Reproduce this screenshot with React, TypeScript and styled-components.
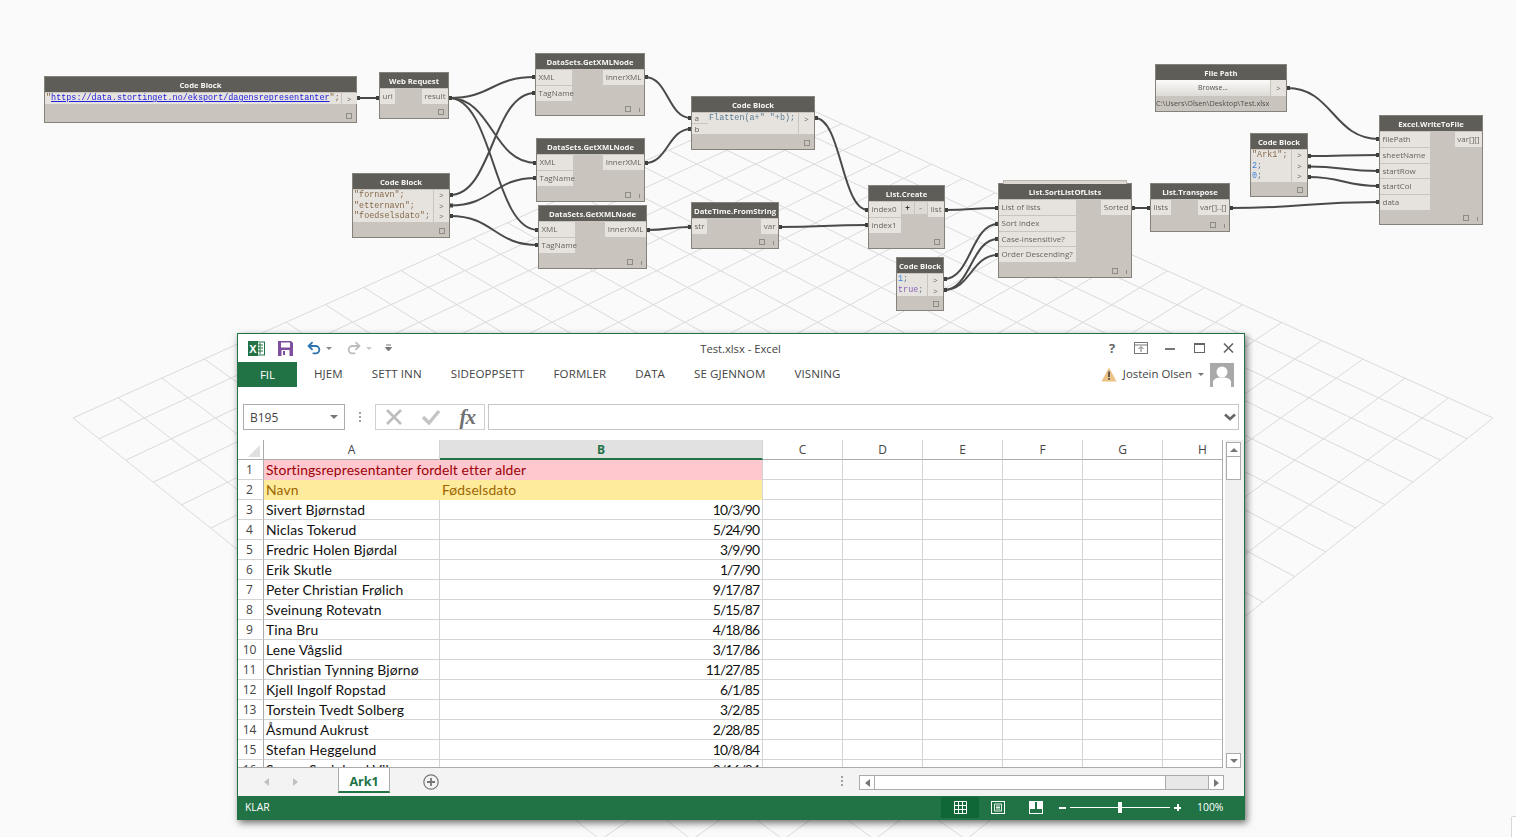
import React from "react";
import styled, {createGlobalStyle} from "styled-components";
import {Redo2, Undo2} from "lucide-react";

const GlobalStyle = createGlobalStyle`
    html, body {
        margin: 0;
        background: #fafafa;
        overflow: hidden;
    }
`;

const Page = styled.div`
    position: relative;
    width: 1516px;
    height: 837px;
    overflow: hidden;
    background: #fafafa;
`;

const CanvasDrawing = styled.svg`
    position: absolute;
    left: 0;
    top: 0;
`;

const NodeLayer = styled.div`
    position: absolute;
    inset: 0;
    filter: blur(0.25px);
`;

const NodeBox = styled.div<{ $x: number; $y: number; $w: number; $h: number }>`
    position: absolute;
    left: ${({$x}) => $x}px;
    top: ${({$y}) => $y}px;
    width: ${({$w}) => $w}px;
    height: ${({$h}) => $h}px;
    box-sizing: border-box;
    display: flex;
    flex-direction: column;
    background: #c9c5be;
    border: 1px solid #85827b;
    font-family: "Open Sans", sans-serif;
    font-size: 8px;
    color: #66635e;
`;

const StackEdge = styled.div`
    position: absolute;
    left: 4px;
    right: 4px;
    top: -4px;
    height: 3px;
    background: #dbd8d2;
    border: 1px solid #b9b6b0;
    border-bottom: none;
`;

const NodeHeader = styled.div`
    height: 15px;
    flex: none;
    display: flex;
    align-items: center;
    justify-content: center;
    background: #5f5d58;
    color: #f6f6f4;
    font-size: 7.7px;
    font-weight: 700;
    white-space: nowrap;
`;

const NodeBody = styled.div`
    flex: 1;
    display: flex;
    justify-content: space-between;
    align-items: flex-start;
    padding-top: 1px;
`;

const PortColumn = styled.div<{ $w?: number }>`
    display: flex;
    flex-direction: column;
    gap: 1px;
    width: ${({$w}) => $w ? `${$w}px` : "auto"};
`;

const Port = styled.div<{ $h?: number; $right?: boolean }>`
    height: ${({$h}) => $h ?? 14.75}px;
    line-height: ${({$h}) => $h ?? 14.75}px;
    padding: 0 2.5px;
    background: #e6e3de;
    white-space: nowrap;
    text-align: ${({$right}) => $right ? "right" : "left"};
`;

const ListButtons = styled.div`
    display: flex;
    gap: 1px;
    margin-left: -1px;
`;

const ListButton = styled.div<{ $dark?: boolean }>`
    width: 12px;
    height: 12px;
    line-height: 12px;
    text-align: center;
    font-weight: 700;
    background: #dedbd6;
    color: ${({$dark}) => $dark ? "#3b3a37" : "#99958f"};
`;

const NodeFooter = styled.div`
    height: 12px;
    flex: none;
    display: flex;
    justify-content: flex-end;
    align-items: center;
    gap: 8px;
    padding-right: 4px;
`;

const ResizeSquare = styled.span`
    width: 4px;
    height: 4px;
    border: 1px solid #8f8c86;
`;

const InfoTick = styled.span`
    width: 1px;
    height: 4px;
    margin-top: 2px;
    background: #8f8c86;
`;

const CodeRows = styled.div`
    display: flex;
    flex: none;
    padding-top: 1px;
`;

const CodePanel = styled.div<{ $grow?: boolean; $w?: number }>`
    flex: ${({$grow}) => $grow ? 1 : "none"};
    width: ${({$w}) => $w ? `${$w}px` : "auto"};
    padding: 0 1px;
    background: #e6e3de;
    font-family: "Liberation Mono", "DejaVu Sans Mono", monospace;
    font-size: 8.45px;
    white-space: nowrap;
`;

const CodeLine = styled.div<{ $h?: number }>`
    height: ${({$h}) => $h ?? 10.7}px;
    line-height: ${({$h}) => $h ?? 10.7}px;
`;

const Str = styled.span`
    color: #86694a;
`;

const Num = styled.span`
    color: #3b83e0;
`;

const Bool = styled.span`
    color: #8a62b8;
`;

const Plain = styled.span`
    color: #5d7c92;
`;

const UrlLink = styled.span`
    color: #2222dd;
    text-decoration: underline;
`;

const OutColumn = styled.div`
    flex: none;
    width: 15px;
    margin-left: 1px;
    display: flex;
    flex-direction: column;
    background: #e6e3de;
`;

const OutMark = styled.div<{ $h?: number }>`
    height: ${({$h}) => $h ?? 10.7}px;
    line-height: ${({$h}) => $h ?? 10.7}px;
    text-align: center;
    font-size: 8px;
`;

const BrowseRow = styled.div`
    display: flex;
    height: 16px;
    flex: none;
`;

const BrowseButton = styled.div`
    flex: 1;
    line-height: 16px;
    text-align: center;
    font-size: 7px;
    color: #55534f;
    background: linear-gradient(#fbfbfa, #dedbd5);
`;

const PathText = styled.div`
    line-height: 15px;
    font-size: 7.3px;
    color: #4f4d49;
    white-space: nowrap;
`;

/* Excel window */

const ExcelWindow = styled.div`
    position: absolute;
    left: 237px;
    top: 333px;
    width: 1008px;
    height: 487px;
    box-sizing: border-box;
    display: flex;
    flex-direction: column;
    background: #fff;
    border: 1px solid #217346;
    box-shadow: 2px 3px 7px rgba(0, 0, 0, 0.55);
    font-family: "Open Sans", sans-serif;
    color: #444;
`;

const TitleBar = styled.div`
    position: relative;
    height: 28px;
    flex: none;
    display: flex;
    align-items: center;
    padding: 0 10px;
`;

const QuickAccess = styled.div`
    display: flex;
    align-items: center;
`;

const TitleText = styled.div`
    flex: 1;
    text-align: center;
    font-size: 11.2px;
    color: #444;
    margin-left: -16px;
`;

const WindowButtons = styled.div`
    display: flex;
    align-items: center;
    gap: 15px;
`;

const HelpMark = styled.span`
    font-size: 13px;
    font-weight: 700;
    color: #666;
    width: 14px;
    text-align: center;
`;

const TabsRow = styled.div`
    height: 25px;
    flex: none;
    display: flex;
    align-items: center;
    gap: 29px;
    font-size: 11.55px;
    padding-right: 10px;
`;

const FileTab = styled.div`
    width: 59px;
    height: 25px;
    line-height: 25px;
    margin-right: -12px;
    text-align: center;
    background: #217346;
    color: #fff;
`;

const RibbonTab = styled.div`
    margin-bottom: 2px;
    letter-spacing: 0.1px;
    color: #444;
    white-space: nowrap;
`;

const Account = styled.div`
    margin-left: auto;
    display: flex;
    align-items: center;
    font-size: 11.4px;
`;

const AccountName = styled.span`
    margin: 0 0 2px 5px;
    color: #444;
`;

const Avatar = styled.svg`
    display: block;
    margin-left: 6px;
`;

const Caret = styled.span<{ $color?: string; $up?: boolean; $size?: number }>`
    display: inline-block;
    width: 0;
    height: 0;
    border-left: ${({$size}) => $size ?? 3}px solid transparent;
    border-right: ${({$size}) => $size ?? 3}px solid transparent;
    ${({$up, $color, $size}) => $up
        ? `border-bottom: ${$size ?? 3}px solid ${$color ?? "#777"};`
        : `border-top: ${$size ?? 3}px solid ${$color ?? "#777"};`}
`;

const FormulaRow = styled.div`
    height: 26px;
    flex: none;
    margin: 17px 5px 10px 5px;
    display: flex;
    align-items: stretch;
`;

const NameBox = styled.div`
    width: 102px;
    box-sizing: border-box;
    display: flex;
    align-items: center;
    justify-content: space-between;
    padding: 0 6px 0 6px;
    border: 1px solid #ababab;
    font-size: 12px;
    color: #444;
`;

const GripDots = styled.div`
    width: 30px;
    display: flex;
    flex-direction: column;
    align-items: center;
    justify-content: center;
    gap: 2px;
`;

const GripDot = styled.span`
    width: 2px;
    height: 2px;
    background: #a0a0a0;
`;

const FormulaButtons = styled.div`
    width: 110px;
    box-sizing: border-box;
    display: flex;
    align-items: center;
    justify-content: space-between;
    padding: 0 9px;
    border: 1px solid #d0d0d0;
`;

const FxText = styled.span`
    font-family: "Liberation Serif", serif;
    font-style: italic;
    font-weight: 700;
    font-size: 21px;
    color: #707070;
    letter-spacing: -1px;
`;

const FormulaInput = styled.div`
    flex: 1;
    margin-left: 3px;
    display: flex;
    align-items: center;
    justify-content: flex-end;
    padding-right: 2px;
    border: 1px solid #c6c6c6;
`;

const SheetArea = styled.div`
    height: 328px;
    flex: none;
    display: flex;
`;

const Sheet = styled.div`
    width: 985px;
    height: 328px;
    flex: none;
    overflow: hidden;
    box-sizing: border-box;
    display: grid;
    grid-template-columns: 26px 176px 323px repeat(6, 80px);
    grid-auto-rows: 20px;
    border-right: 1px solid #ababab;
    border-bottom: 1px solid #ababab;
`;

const CornerCell = styled.div`
    position: relative;
    box-sizing: border-box;
    border-right: 1px solid #ababab;
    border-bottom: 1px solid #ababab;
`;

const CornerMark = styled.span`
    position: absolute;
    right: 3px;
    bottom: 2px;
    width: 12px;
    height: 12px;
    background: #dfdfdf;
    clip-path: polygon(100% 0, 100% 100%, 0 100%);
`;

const ColumnHead = styled.div<{ $active?: boolean }>`
    box-sizing: border-box;
    text-align: center;
    line-height: 19px;
    font-size: 12px;
    background: ${({$active}) => $active ? "#e1e1e1" : "#fff"};
    color: ${({$active}) => $active ? "#217346" : "#444"};
    font-weight: ${({$active}) => $active ? 700 : 400};
    border-right: 1px solid #d4d4d4;
    border-bottom: ${({$active}) => $active ? "2px solid #217346" : "1px solid #ababab"};
`;

const RowHead = styled.div`
    box-sizing: border-box;
    text-align: center;
    line-height: 20px;
    font-size: 12px;
    padding-right: 2px;
    color: #444;
    border-right: 1px solid #ababab;
    border-bottom: 1px solid #d4d4d4;
`;

const Cell = styled.div<{ $fill?: string; $color?: string; $noLine?: boolean; $span?: number }>`
    box-sizing: border-box;
    grid-column: span ${({$span}) => $span ?? 1};
    padding: 0 2px;
    font-family: "Lato", sans-serif;
    font-size: 13.9px;
    line-height: 20px;
    letter-spacing: 0.12px;
    white-space: nowrap;
    overflow: hidden;
    background: ${({$fill}) => $fill ?? "#fff"};
    color: ${({$color}) => $color ?? "#111"};
    border-right: 1px solid ${({$fill, $noLine}) => $noLine ? ($fill ?? "#fff") : "#d4d4d4"};
    border-bottom: 1px solid ${({$fill}) => $fill ?? "#d4d4d4"};
`;

const DateCell = styled(Cell)`
    text-align: right;
    letter-spacing: -0.95px;
    padding-right: 3px;
`;

const VerticalScroll = styled.div`
    flex: 1;
    display: flex;
    flex-direction: column;
    align-items: center;
    padding-top: 2px;
    background: linear-gradient(to right, #fff 2px, #f0f0f0 2px, #f0f0f0 20px);
`;

const ScrollButton = styled.div`
    width: 15px;
    height: 15px;
    box-sizing: border-box;
    flex: none;
    display: flex;
    align-items: center;
    justify-content: center;
    background: #fff;
    border: 1px solid #ababab;
`;

const VerticalThumb = styled.div`
    width: 15px;
    height: 23px;
    flex: none;
    box-sizing: border-box;
    background: #fff;
    border: 1px solid #ababab;
    border-top: none;
`;

const ScrollGap = styled.div`
    flex: 1;
`;

const TabBar = styled.div`
    height: 28px;
    flex: none;
    display: flex;
    align-items: flex-start;
    background: #f3f3f3;
`;

const SheetNav = styled.div`
    width: 100px;
    height: 28px;
    box-sizing: border-box;
    display: flex;
    align-items: center;
    padding-left: 26px;
    gap: 24px;
`;

const SheetTab = styled.div`
    width: 52px;
    height: 25px;
    box-sizing: border-box;
    text-align: center;
    line-height: 27px;
    font-size: 12.5px;
    font-weight: 700;
    color: #217346;
    background: #fff;
    border-left: 1px solid #ababab;
    border-right: 1px solid #ababab;
    border-bottom: 2px solid #217346;
`;

const AddSheet = styled.svg`
    display: block;
    margin: 6px 0 0 33px;
`;

const BarGrip = styled.div`
    margin: 8px 0 0 auto;
    width: 2px;
    display: flex;
    flex-direction: column;
    gap: 2px;
`;

const HorizontalScroll = styled.div`
    width: 365px;
    height: 15px;
    margin: 7px 20px 0 16px;
    box-sizing: border-box;
    display: flex;
    background: #e8e8e8;
    border: 1px solid #ababab;
`;

const HorizontalEnd = styled.div`
    width: 14px;
    flex: none;
    display: flex;
    align-items: center;
    justify-content: center;
    background: #fff;
`;

const HorizontalThumb = styled.div`
    width: 292px;
    flex: none;
    box-sizing: border-box;
    background: #fff;
    border-left: 1px solid #ababab;
    border-right: 1px solid #ababab;
`;

const HorizontalTrack = styled.div`
    flex: 1;
    border-right: 1px solid #ababab;
`;

const StatusBar = styled.div`
    height: 23px;
    flex: none;
    display: flex;
    align-items: center;
    background: #217346;
    color: #fff;
    font-size: 10.4px;
`;

const StatusLabel = styled.span`
    margin: 0 0 2px 7px;
`;

const ViewButton = styled.div<{ $active?: boolean }>`
    width: 38px;
    height: 21px;
    display: flex;
    align-items: center;
    justify-content: center;
    background: ${({$active}) => $active ? "#0f6637" : "transparent"};
`;

const ViewGroup = styled.div`
    margin-left: auto;
    display: flex;
`;

const ZoomMark = styled.span<{ $plus?: boolean }>`
    position: relative;
    width: 7px;
    height: 2px;
    margin: ${({$plus}) => $plus ? "0 0 0 4px" : "0 4px 0 4px"};
    background: #fff;
    ${({$plus}) => $plus ? `
        &::after {
            content: "";
            position: absolute;
            left: 2.5px;
            top: -2.5px;
            width: 2px;
            height: 7px;
            background: #fff;
        }
    ` : ""}
`;

const ZoomTrack = styled.div`
    position: relative;
    width: 100px;
    height: 1px;
    background: #fff;
`;

const ZoomThumb = styled.span`
    position: absolute;
    left: 48px;
    top: -5px;
    width: 4px;
    height: 11px;
    background: #fff;
`;

const ZoomValue = styled.span`
    width: 27px;
    margin: 0 20px 2px 16px;
    font-size: 10.4px;
    white-space: nowrap;
`;

const CornerScrap = styled.div`
    position: absolute;
    left: 1511px;
    top: 816px;
    width: 8px;
    height: 24px;
    background: #fff;
    border: 1px solid #d8d8d8;
    border-radius: 2px;
`;

/* background grid: a projective map of the unit square onto the floor quad */
const floorGrid = () => {
    const [x0, y0, x1, y1, x2, y2, x3, y3] = [785, 98, 1493, 418, 783, 986, 73, 418];
    const dx1 = x1 - x2, dx2 = x3 - x2, sx = x0 - x1 + x2 - x3;
    const dy1 = y1 - y2, dy2 = y3 - y2, sy = y0 - y1 + y2 - y3;
    const den = dx1 * dy2 - dx2 * dy1;
    const g = (sx * dy2 - dx2 * sy) / den;
    const h = (dx1 * sy - sx * dy1) / den;
    const map = (u: number, v: number) => {
        const w = g * u + h * v + 1;
        return [
            ((x1 - x0 + g * x1) * u + (x3 - x0 + h * x3) * v + x0) / w,
            ((y1 - y0 + g * y1) * u + (y3 - y0 + h * y3) * v + y0) / w,
        ];
    };
    const lines: number[][] = [];
    for (let i = 0; i <= 20; i++) {
        lines.push([...map(i / 20, 0), ...map(i / 20, 1)]);
        lines.push([...map(0, i / 20), ...map(1, i / 20)]);
    }
    return lines;
};

const wires: number[][] = [
    [357, 98, 379, 98],
    [449, 98, 535, 77],
    [449, 98, 536, 163],
    [449, 98, 538, 230],
    [450, 195, 535, 93],
    [450, 205.5, 536, 178],
    [450, 216, 538, 245],
    [645, 77, 691, 118],
    [645, 163, 691, 129],
    [647, 230, 691, 227],
    [815, 118, 868, 210],
    [779, 227, 868, 225],
    [945, 210, 998, 208],
    [944, 279, 998, 224],
    [944, 290, 998, 239],
    [944, 290, 998, 255],
    [1132, 208, 1150, 208],
    [1230, 208, 1379, 202],
    [1287, 88, 1379, 139],
    [1308, 156, 1379, 155],
    [1308, 166.5, 1379, 171],
    [1308, 177, 1379, 186],
];

const wirePath = ([a, b, c, d]: number[]) => {
    const bend = (c - a) / 2;
    return `M${a} ${b}C${a + bend} ${b} ${c - bend} ${d} ${c} ${d}`;
};

const Canvas: React.FC = () => <CanvasDrawing width={1516} height={837}>
    {floorGrid().map((l, i) =>
        <line key={i} x1={l[0]} y1={l[1]} x2={l[2]} y2={l[3]} stroke="#dadada" strokeWidth={1}/>)}
    {wires.map((w, i) => <g key={i}>
        <path d={wirePath(w)} fill="none" stroke="#4a4a48" strokeWidth={2}/>
        <rect x={w[0]} y={w[1] - 2} width={3} height={4} fill="#3f3f3d"/>
        <rect x={w[2] - 3} y={w[3] - 2} width={3} height={4} fill="#3f3f3d"/>
    </g>)}
</CanvasDrawing>;

type FuncNodeProps = {
    title: string;
    x: number;
    y: number;
    w: number;
    h: number;
    inputs: string[];
    outputs: string[];
    inWidth?: number;
    tick?: boolean;
    stacked?: boolean;
    middle?: React.ReactNode;
};

const NodeMarks: React.FC<{ tick?: boolean }> = ({tick}) => <NodeFooter>
    <ResizeSquare/>
    {tick && <InfoTick/>}
</NodeFooter>;

const FuncNode: React.FC<FuncNodeProps> = ({title, x, y, w, h, inputs, outputs, inWidth, tick, stacked, middle}) =>
    <NodeBox $x={x} $y={y} $w={w} $h={h}>
        {stacked && <StackEdge/>}
        <NodeHeader>{title}</NodeHeader>
        <NodeBody>
            <PortColumn $w={inWidth}>
                {inputs.map(name => <Port key={name}>{name}</Port>)}
            </PortColumn>
            {middle}
            <PortColumn>
                {outputs.map(name => <Port key={name} $right>{name}</Port>)}
            </PortColumn>
        </NodeBody>
        <NodeMarks tick={tick}/>
    </NodeBox>;

const Nodes: React.FC = () => <NodeLayer>
    <NodeBox $x={44} $y={76} $w={313} $h={47}>
        <NodeHeader>Code Block</NodeHeader>
        <CodeRows>
            <CodePanel $grow>
                <CodeLine $h={11}><Str>"</Str><UrlLink>https://data.stortinget.no/eksport/dagensrepresentanter</UrlLink><Str>";</Str></CodeLine>
            </CodePanel>
            <OutColumn><OutMark $h={11}>&gt;</OutMark></OutColumn>
        </CodeRows>
        <ScrollGap/>
        <NodeMarks/>
    </NodeBox>

    <FuncNode title="Web Request" x={379} y={72} w={70} h={47} inputs={["url"]} outputs={["result"]}/>
    <FuncNode title="DataSets.GetXMLNode" x={535} y={53} w={110} h={63} inputs={["XML", "TagName"]}
              outputs={["InnerXML"]} inWidth={36} tick/>
    <FuncNode title="DataSets.GetXMLNode" x={536} y={138} w={109} h={64} inputs={["XML", "TagName"]}
              outputs={["InnerXML"]} inWidth={36} tick/>
    <FuncNode title="DataSets.GetXMLNode" x={538} y={205} w={109} h={64} inputs={["XML", "TagName"]}
              outputs={["InnerXML"]} inWidth={36} tick/>

    <NodeBox $x={352} $y={173} $w={98} $h={65}>
        <NodeHeader>Code Block</NodeHeader>
        <CodeRows>
            <CodePanel $grow>
                <CodeLine><Str>"fornavn";</Str></CodeLine>
                <CodeLine><Str>"etternavn";</Str></CodeLine>
                <CodeLine><Str>"foedselsdato";</Str></CodeLine>
            </CodePanel>
            <OutColumn>
                <OutMark>&gt;</OutMark>
                <OutMark>&gt;</OutMark>
                <OutMark>&gt;</OutMark>
            </OutColumn>
        </CodeRows>
        <ScrollGap/>
        <NodeMarks/>
    </NodeBox>

    <NodeBox $x={691} $y={96} $w={124} $h={54}>
        <NodeHeader>Code Block</NodeHeader>
        <CodeRows>
            <PortColumn $w={16}>
                <Port $h={10}>a</Port>
                <Port $h={10}>b</Port>
            </PortColumn>
            <CodePanel $w={88}><CodeLine $h={11}><Plain>Flatten(a+" "+b);</Plain></CodeLine></CodePanel>
            <OutColumn><OutMark $h={11}>&gt;</OutMark></OutColumn>
        </CodeRows>
        <ScrollGap/>
        <NodeMarks/>
    </NodeBox>

    <FuncNode title="DateTime.FromString" x={691} y={202} w={88} h={47} inputs={["str"]} outputs={["var"]} tick/>
    <FuncNode title="List.Create" x={868} y={185} w={77} h={64} inputs={["index0", "index1"]} outputs={["list"]} inWidth={32}
              middle={<ListButtons><ListButton $dark>+</ListButton><ListButton>-</ListButton></ListButtons>}/>
    <FuncNode title="List.SortListOfLists" x={998} y={183} w={134} h={95} stacked tick inWidth={77}
              inputs={["List of lists", "Sort index", "Case-insensitive?", "Order Descending?"]} outputs={["Sorted"]}/>

    <NodeBox $x={896} $y={257} $w={48} $h={54}>
        <NodeHeader>Code Block</NodeHeader>
        <CodeRows>
            <CodePanel $grow>
                <CodeLine $h={11}><Num>1</Num><Plain>;</Plain></CodeLine>
                <CodeLine $h={11}><Bool>true</Bool><Plain>;</Plain></CodeLine>
            </CodePanel>
            <OutColumn>
                <OutMark $h={11}>&gt;</OutMark>
                <OutMark $h={11}>&gt;</OutMark>
            </OutColumn>
        </CodeRows>
        <ScrollGap/>
        <NodeMarks/>
    </NodeBox>

    <NodeBox $x={1155} $y={64} $w={132} $h={48}>
        <NodeHeader>File Path</NodeHeader>
        <BrowseRow>
            <BrowseButton>Browse...</BrowseButton>
            <OutColumn><OutMark $h={16}>&gt;</OutMark></OutColumn>
        </BrowseRow>
        <PathText>C:\Users\Olsen\Desktop\Test.xlsx</PathText>
    </NodeBox>

    <NodeBox $x={1250} $y={133} $w={58} $h={64}>
        <NodeHeader>Code Block</NodeHeader>
        <CodeRows>
            <CodePanel $grow>
                <CodeLine><Str>"Ark1";</Str></CodeLine>
                <CodeLine><Num>2</Num><Plain>;</Plain></CodeLine>
                <CodeLine><Num>0</Num><Plain>;</Plain></CodeLine>
            </CodePanel>
            <OutColumn>
                <OutMark>&gt;</OutMark>
                <OutMark>&gt;</OutMark>
                <OutMark>&gt;</OutMark>
            </OutColumn>
        </CodeRows>
        <ScrollGap/>
        <NodeMarks/>
    </NodeBox>

    <FuncNode title="List.Transpose" x={1150} y={183} w={80} h={49} inputs={["lists"]} outputs={["var[]..[]"]} tick/>
    <FuncNode title="Excel.WriteToFile" x={1379} y={115} w={104} h={110} tick inWidth={50}
              inputs={["filePath", "sheetName", "startRow", "startCol", "data"]} outputs={["var[][]"]}/>
</NodeLayer>;

const people: [string, string][] = [
    ["Sivert Bjørnstad", "10/3/90"],
    ["Niclas Tokerud", "5/24/90"],
    ["Fredric Holen Bjørdal", "3/9/90"],
    ["Erik Skutle", "1/7/90"],
    ["Peter Christian Frølich", "9/17/87"],
    ["Sveinung Rotevatn", "5/15/87"],
    ["Tina Bru", "4/18/86"],
    ["Lene Vågslid", "3/17/86"],
    ["Christian Tynning Bjørnø", "11/27/85"],
    ["Kjell Ingolf Ropstad", "6/1/85"],
    ["Torstein Tvedt Solberg", "3/2/85"],
    ["Åsmund Aukrust", "2/28/85"],
    ["Stefan Heggelund", "10/8/84"],
    ["Sverre Sveinlund Vik", "9/16/84"],
];

const emptyColumns = ["C", "D", "E", "F", "G", "H"];

const EmptyCells: React.FC<{ row: number }> = ({row}) => <>
    {emptyColumns.map(c => <Cell key={`${c}${row}`}/>)}
</>;

const ExcelLogo = () => <svg width="17" height="17" viewBox="0 0 17 17" style={{display: "block"}}>
    <rect x="8" y="2" width="8.5" height="13" fill="#fff" stroke="#217346"/>
    <path d="M10 5h5M10 8h5M10 11h5M12 3v11" stroke="#217346" strokeWidth="1"/>
    <rect x="0" y="1" width="10" height="15" fill="#217346"/>
    <text x="5" y="13" textAnchor="middle" fontFamily="Liberation Sans" fontWeight="700" fontSize="11" fill="#fff">X</text>
</svg>;

const SaveIcon = () => <svg width="15" height="15" viewBox="0 0 15 15" style={{display: "block", margin: "0 13px 0 13px"}}>
    <path d="M0 0h13l2 2v13H0z" fill="#7d4f9e"/>
    <rect x="3" y="1.5" width="9" height="5" fill="#fff"/>
    <rect x="3.5" y="9" width="8" height="6" fill="#fff"/>
    <rect x="5" y="10" width="2" height="4" fill="#7d4f9e"/>
</svg>;

const CrossIcon = () => <svg width="18" height="18" viewBox="0 0 18 18" style={{display: "block"}}>
    <path d="M2 2L16 16M16 2L2 16" stroke="#bdbdbd" strokeWidth="2.6"/>
</svg>;

const CheckIcon = () => <svg width="20" height="18" viewBox="0 0 20 18" style={{display: "block"}}>
    <path d="M2 9L8 15L18 3" fill="none" stroke="#c4c4c4" strokeWidth="3.4"/>
</svg>;

const App: React.FC = () => <Page>
    <GlobalStyle/>
    <Canvas/>
    <Nodes/>
    <CornerScrap/>
    <ExcelWindow>
        <TitleBar>
            <QuickAccess>
                <ExcelLogo/>
                <SaveIcon/>
                <Undo2 size={16} strokeWidth={2.8} color="#2f75b0"/>
                <Caret $color="#888" style={{margin: "0 0 0 4px"}}/>
                <Redo2 size={16} strokeWidth={2.8} color="#bdbdbd" style={{marginLeft: 14}}/>
                <Caret $color="#c8c8c8" style={{margin: "0 0 0 4px"}}/>
                <svg width="7" height="8" viewBox="0 0 7 8" style={{display: "block", marginLeft: 13}}>
                    <path d="M1 1h5M0.5 3.5h6L3.5 7z" stroke="#777" strokeWidth="1" fill="#777"/>
                </svg>
            </QuickAccess>
            <TitleText>Test.xlsx - Excel</TitleText>
            <WindowButtons>
                <HelpMark>?</HelpMark>
                <svg width="14" height="12" viewBox="0 0 14 12" style={{display: "block"}}>
                    <rect x="0.5" y="0.5" width="13" height="11" fill="none" stroke="#777"/>
                    <path d="M0.5 3h13M7 10V5M4.5 7L7 4.5L9.5 7" fill="none" stroke="#777"/>
                </svg>
                <svg width="10" height="12" viewBox="0 0 10 12" style={{display: "block", marginLeft: 2}}>
                    <rect x="0" y="6" width="10" height="2" fill="#777"/>
                </svg>
                <svg width="11" height="12" viewBox="0 0 11 12" style={{display: "block", marginLeft: 4}}>
                    <rect x="0.5" y="1.5" width="10" height="9" fill="none" stroke="#666"/>
                    <rect x="0" y="1" width="11" height="2" fill="#666"/>
                </svg>
                <svg width="11" height="12" viewBox="0 0 11 12" style={{display: "block", marginLeft: 3}}>
                    <path d="M1 1.5L10 10.5M10 1.5L1 10.5" stroke="#666" strokeWidth="1.7"/>
                </svg>
            </WindowButtons>
        </TitleBar>

        <TabsRow>
            <FileTab>FIL</FileTab>
            {["HJEM", "SETT INN", "SIDEOPPSETT", "FORMLER", "DATA", "SE GJENNOM", "VISNING"].map(tab =>
                <RibbonTab key={tab}>{tab}</RibbonTab>)}
            <Account>
                <svg width="16" height="15" viewBox="0 0 16 15" style={{display: "block", marginRight: 1}}>
                    <path d="M8 0.5L15.5 14.5H0.5z" fill="#ecc184"/>
                    <path d="M7.2 4.5h1.6v5.5H7.2zM7.2 11h1.6v1.8H7.2z" fill="#444"/>
                </svg>
                <AccountName>Jostein Olsen</AccountName>
                <Caret $color="#777" style={{margin: "0 0 0 6px"}}/>
                <Avatar width="24" height="24" viewBox="0 0 24 24">
                    <rect width="24" height="24" fill="#a9a9a9"/>
                    <circle cx="12" cy="9" r="5.5" fill="#fff"/>
                    <path d="M3 24v-5c0-3 4-4 6-4.500h6c2 .5 6 1.500 6 4.500v5z" fill="#fff"/>
                </Avatar>
            </Account>
        </TabsRow>

        <FormulaRow>
            <NameBox>B195<Caret $color="#777" $size={4}/></NameBox>
            <GripDots><GripDot/><GripDot/><GripDot/></GripDots>
            <FormulaButtons>
                <CrossIcon/>
                <CheckIcon/>
                <FxText>fx</FxText>
            </FormulaButtons>
            <FormulaInput>
                <svg width="12" height="8" viewBox="0 0 12 8" style={{display: "block"}}>
                    <path d="M1 1.500L6 6L11 1.500" fill="none" stroke="#666" strokeWidth="2.6"/>
                </svg>
            </FormulaInput>
        </FormulaRow>

        <SheetArea>
            <Sheet>
                <CornerCell><CornerMark/></CornerCell>
                <ColumnHead>A</ColumnHead>
                <ColumnHead $active>B</ColumnHead>
                {emptyColumns.map(c => <ColumnHead key={c}>{c}</ColumnHead>)}

                <RowHead>1</RowHead>
                <Cell $fill="#ffc7ce" $color="#9c0006" $span={2}>Stortingsrepresentanter fordelt etter alder</Cell>
                <EmptyCells row={1}/>

                <RowHead>2</RowHead>
                <Cell $fill="#ffeb9c" $color="#9c6500" $noLine>Navn</Cell>
                <Cell $fill="#ffeb9c" $color="#9c6500">Fødselsdato</Cell>
                <EmptyCells row={2}/>

                {people.map(([name, date], i) => <React.Fragment key={name}>
                    <RowHead>{i + 3}</RowHead>
                    <Cell>{name}</Cell>
                    <DateCell>{date}</DateCell>
                    <EmptyCells row={i + 3}/>
                </React.Fragment>)}
            </Sheet>
            <VerticalScroll>
                <ScrollButton><Caret $up $color="#777" $size={4}/></ScrollButton>
                <VerticalThumb/>
                <ScrollGap/>
                <ScrollButton><Caret $color="#777" $size={4}/></ScrollButton>
            </VerticalScroll>
        </SheetArea>

        <TabBar>
            <SheetNav>
                <svg width="5" height="8" viewBox="0 0 5 8" style={{display: "block"}}><path d="M5 0v8L0 4z" fill="#c0c0c0"/></svg>
                <svg width="5" height="8" viewBox="0 0 5 8" style={{display: "block"}}><path d="M0 0v8l5-4z" fill="#c0c0c0"/></svg>
            </SheetNav>
            <SheetTab>Ark1</SheetTab>
            <AddSheet width="16" height="16" viewBox="0 0 16 16">
                <circle cx="8" cy="8" r="7.2" fill="none" stroke="#777" strokeWidth="1.2"/>
                <path d="M8 4v8M4 8h8" stroke="#777" strokeWidth="1.8"/>
            </AddSheet>
            <BarGrip><GripDot/><GripDot/><GripDot/></BarGrip>
            <HorizontalScroll>
                <HorizontalEnd>
                    <svg width="5" height="8" viewBox="0 0 5 8" style={{display: "block"}}><path d="M5 0v8L0 4z" fill="#777"/></svg>
                </HorizontalEnd>
                <HorizontalThumb/>
                <HorizontalTrack/>
                <HorizontalEnd>
                    <svg width="5" height="8" viewBox="0 0 5 8" style={{display: "block"}}><path d="M0 0v8l5-4z" fill="#777"/></svg>
                </HorizontalEnd>
            </HorizontalScroll>
        </TabBar>

        <StatusBar>
            <StatusLabel>KLAR</StatusLabel>
            <ViewGroup>
                <ViewButton $active>
                    <svg width="13" height="13" viewBox="0 0 13 13" style={{display: "block"}}>
                        <path d="M.5.5h12v12H.5zM4.500.5v12M8.500.5v12M.5 4.500h12M.5 8.500h12" fill="none" stroke="#fff"/>
                    </svg>
                </ViewButton>
                <ViewButton>
                    <svg width="14" height="13" viewBox="0 0 14 13" style={{display: "block"}}>
                        <rect x=".5" y=".5" width="13" height="12" fill="none" stroke="#fff"/>
                        <path d="M3.500 3h7v7h-7zM5 5h4M5 6.500h4M5 8h4" fill="none" stroke="#fff" strokeWidth=".9"/>
                    </svg>
                </ViewButton>
                <ViewButton>
                    <svg width="14" height="13" viewBox="0 0 14 13" style={{display: "block"}}>
                        <rect x=".5" y=".5" width="13" height="12" fill="none" stroke="#fff"/>
                        <path d="M1 1h5v7H1zM8 1h5v7H8z" fill="#fff"/>
                    </svg>
                </ViewButton>
            </ViewGroup>
            <ZoomMark/>
            <ZoomTrack><ZoomThumb/></ZoomTrack>
            <ZoomMark $plus/>
            <ZoomValue>100%</ZoomValue>
        </StatusBar>
    </ExcelWindow>
</Page>;

export default App;
